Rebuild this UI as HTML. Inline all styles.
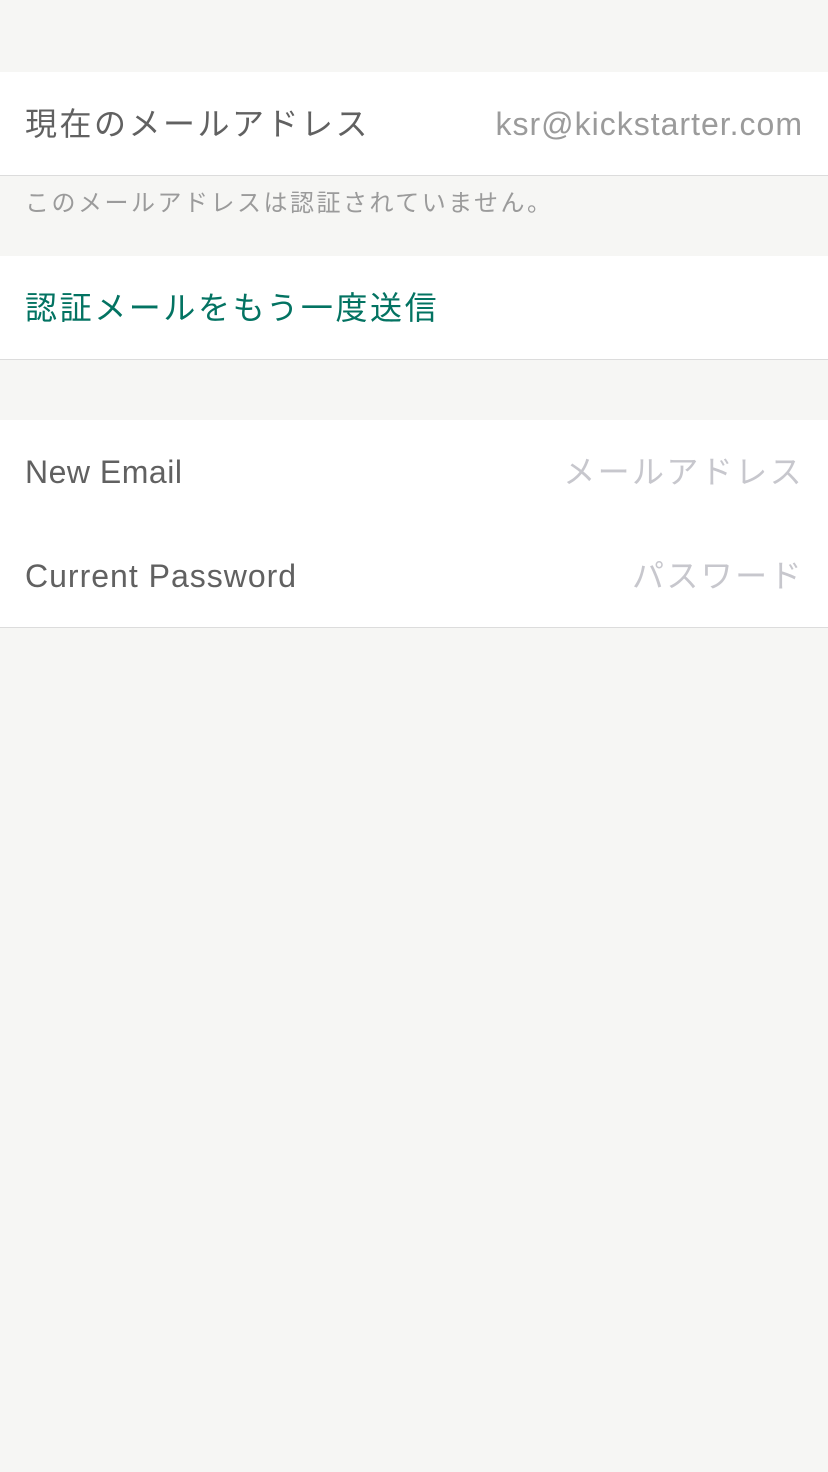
<!DOCTYPE html>
<html><head><meta charset="utf-8"><style>
body{margin:0;width:828px;height:1472px;background:#f6f6f4;font-family:"Liberation Sans","Noto Sans CJK JP",sans-serif;position:relative;overflow:hidden}
.b{position:absolute;left:0;width:828px;background:#fff}
.t{position:absolute;font-size:32px;line-height:40px;white-space:nowrap}
.r{text-align:right}
.line{position:absolute;left:0;width:828px;height:1px;background:#dcdcdc}
</style></head><body>
<div class="b" style="top:72px;height:103px"></div>
<div class="line" style="top:175px"></div>
<div class="t" style="left:25px;top:104px;color:#616161;letter-spacing:2.5px">現在のメールアドレス</div>
<div class="t r" style="right:25px;top:104px;color:#9b9b9b;letter-spacing:1px">ksr@kickstarter.com</div>
<div class="t" style="left:25px;top:188px;font-size:24px;line-height:32px;color:#9b9b9b;letter-spacing:2.5px">このメールアドレスは認証されていません。</div>
<div class="b" style="top:256px;height:103px"></div>
<div class="line" style="top:359px"></div>
<div class="t" style="left:25px;top:288px;color:#037362;letter-spacing:2.6px">認証メールをもう一度送信</div>
<div class="b" style="top:420px;height:207px"></div>
<div class="line" style="top:627px"></div>
<div class="t" style="left:25px;top:452px;color:#616161;letter-spacing:0.5px">New Email</div>
<div class="t r" style="right:24px;top:452px;color:#c7c7cd;letter-spacing:2.4px">メールアドレス</div>
<div class="t" style="left:25px;top:556px;color:#616161;letter-spacing:1px">Current Password</div>
<div class="t r" style="right:24px;top:556px;color:#c7c7cd;letter-spacing:2.4px">パスワード</div>
</body></html>
